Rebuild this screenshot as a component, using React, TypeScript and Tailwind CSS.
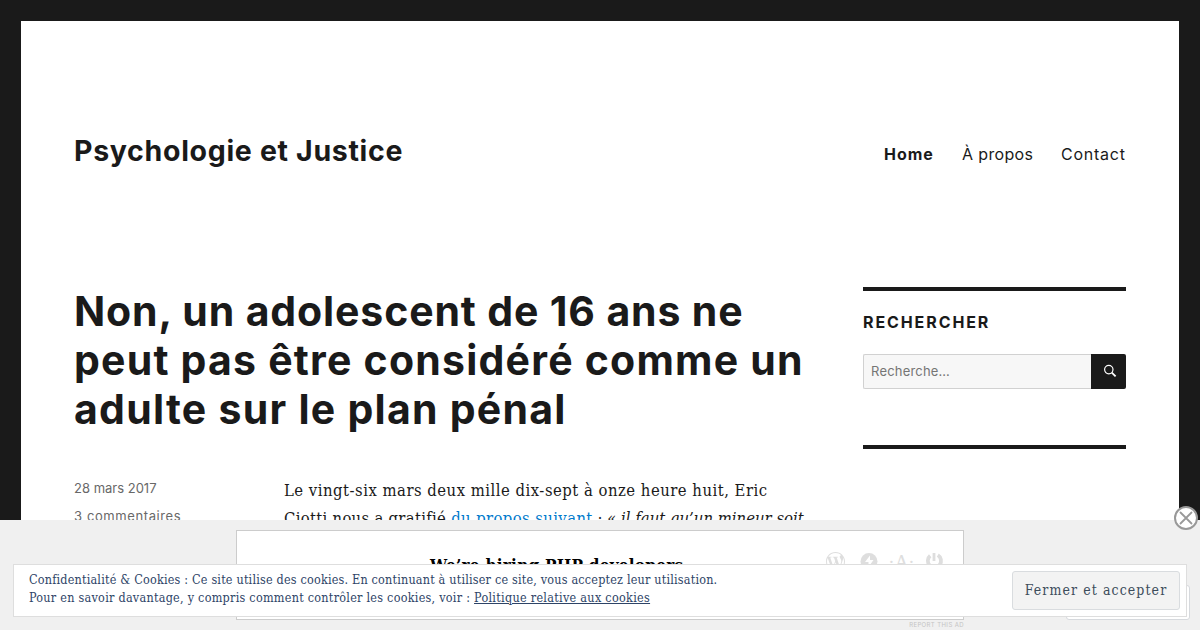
import { SiWordpress } from "react-icons/si"

const navItems = [
  { label: "Home", className: "w-[50px] font-bold tracking-[1px]" },
  { label: "À propos", className: "w-[71px] tracking-[0.35px]" },
  { label: "Contact", className: "w-16 tracking-[0.75px]" },
]

function Header() {
  return (
    <header className="flex justify-between items-center h-[260px] px-[53px]">
      <h1 className="text-[28.5px] leading-9 font-bold tracking-[0.68px] whitespace-nowrap">Psychologie et Justice</h1>
      <nav className="flex gap-7 mt-[5px] mr-px">
        {navItems.map((item) => (
          <a key={item.label} href="#" className={`text-base leading-6 whitespace-nowrap ${item.className}`}>
            {item.label}
          </a>
        ))}
      </nav>
    </header>
  )
}

function Article() {
  return (
    <article className="w-[736px]">
      <h2 className="flex flex-col text-[41px] leading-[49px] font-bold whitespace-nowrap mt-[6px]">
        <span className="tracking-[0.86px]">Non, un adolescent de 16 ans ne</span>
        <span className="tracking-[1.22px]">peut pas être considéré comme un</span>
        <span className="tracking-[1.26px]">adulte sur le plan pénal</span>
      </h2>
      <div className="flex mt-[40px]">
        <div className="flex flex-col w-[210px] text-[13px] leading-7 text-[#686868] whitespace-nowrap">
          <span className="tracking-[0px]">28 mars 2017</span>
          <span className="tracking-[0.6px]">3 commentaires</span>
        </div>
        <p className="flex flex-col mt-[3px] font-['DejaVu_Serif_Condensed','DejaVu_Serif',serif] text-[16.5px] leading-7 whitespace-nowrap">
          <span className="tracking-[0.5px]">Le vingt-six mars deux mille dix-sept à onze heure huit, Eric</span>
          <span className="tracking-[0.3px]">
            Ciotti nous a gratifié <a href="#" className="tracking-[0.4px] text-[#007acc] border-b border-[#007acc]">du propos suivant</a>
            <span className="tracking-[0.02px]"> : « <em>il faut qu’un mineur soit</em></span>
          </span>
        </p>
      </div>
    </article>
  )
}

function Sidebar() {
  return (
    <aside className="w-[263px] mt-[6px]">
      <section className="h-[158px] border-t-4 border-[#1a1a1a] pt-[21px]">
        <h3 className="text-base leading-5 font-bold tracking-[1.9px]">RECHERCHER</h3>
        <form className="flex h-[35px] mt-[22px]">
          <input
            type="search"
            placeholder="Recherche…"
            className="w-[228px] px-[7px] text-[13px] tracking-[0.2px] bg-[#f7f7f7] border border-[#d1d1d1] border-r-0 rounded-l-xs placeholder:text-[#757575] outline-none"
          />
          <button type="button" className="flex items-center justify-center w-[35px] pl-[3px] pb-px bg-[#1a1a1a] rounded-r-xs">
            <svg width="14" height="14" viewBox="0 0 14 14" fill="none" stroke="white">
              <circle cx="5.8" cy="5.6" r="4.2" strokeWidth="1.2" />
              <path d="M8.8 8.6L12.6 12.4" strokeWidth="1.8" />
            </svg>
          </button>
        </form>
      </section>
      <section className="border-t-4 border-[#1a1a1a]" />
    </aside>
  )
}

function AdIcons() {
  return (
    <div className="absolute left-[589px] top-[21px] flex gap-[14px] text-[#dedede]">
      <SiWordpress size={19} />
      <svg width="19" height="19" viewBox="0 0 19 19" fill="currentColor">
        <circle cx="10" cy="9.5" r="8.5" />
        <path d="M11 3.5L6 10h3.5v5l5-7H11z" fill="white" />
      </svg>
      <span className="flex justify-center w-[19px] h-[19px] font-['Liberation_Serif',serif] text-[19px] leading-[19px]">·A·</span>
      <svg width="19" height="19" viewBox="0 0 19 19" fill="none" stroke="currentColor">
        <path d="M5.2 3.8A6.6 6.6 0 1 0 12.8 3.2" strokeWidth="3.8" />
        <path d="M9 1v8" strokeWidth="2.8" />
      </svg>
    </div>
  )
}

function AdBar() {
  return (
    <div className="absolute inset-x-0 bottom-0 h-[110px] bg-[#f0f0f0] pt-[10px]">
      <div className="relative w-[728px] h-[90px] mx-auto bg-white border border-[#ccc]">
        <p className="absolute left-[193px] top-[22px] font-['DejaVu_Serif_Condensed','DejaVu_Serif',serif] text-[17px] leading-6 font-bold text-black whitespace-nowrap tracking-[0.24px]">
          We’re hiring PHP developers
        </p>
        <AdIcons />
      </div>
      <p className="w-[728px] mx-auto text-right text-[6px] leading-[10px] tracking-[0.4px] text-[#c4c4c4]">REPORT THIS AD</p>
      <button type="button" className="absolute right-[2px] -top-[14px]">
        <svg width="24" height="24" viewBox="0 0 24 24" fill="none" stroke="#999">
          <circle cx="12" cy="12" r="11" fill="white" strokeWidth="2" />
          <path d="M6.5 6.5l11 11M17.5 6.5l-11 11" strokeWidth="1.8" strokeLinecap="round" />
        </svg>
      </button>
      <div className="absolute right-[10px] bottom-[10px] w-[124px] h-[35px] bg-white border border-[#d6d9dd] rounded-[3px]" />
    </div>
  )
}

function CookieBanner() {
  return (
    <div className="absolute left-[13px] top-[564px] w-[1174px] h-[53px] flex justify-between bg-white border border-[#dedede] pl-[15px] pr-[6px] font-['DejaVu_Serif_Condensed','DejaVu_Serif',serif] text-[#2e4467]">
      <p className="flex flex-col pt-[6px] text-[12.5px] leading-[18px] whitespace-nowrap">
        <span className="tracking-[0.19px]">Confidentialité &amp; Cookies : Ce site utilise des cookies. En continuant à utiliser ce site, vous acceptez leur utilisation.</span>
        <span className="tracking-[0.255px]">
          Pour en savoir davantage, y compris comment contrôler les cookies, voir : <a href="#" className="underline tracking-[0.29px]">Politique relative aux cookies</a>
        </span>
      </p>
      <button type="button" className="w-[168px] h-[39px] mt-[6px] pb-[2px] bg-[#f3f3f3] border border-[#d9dcdf] rounded-[3px] text-sm tracking-[1.08px] text-[#3d4d5c] whitespace-nowrap">
        Fermer et accepter
      </button>
    </div>
  )
}

export default function App() {
  return (
    <div className="relative h-[630px] overflow-hidden bg-[#1a1a1a] px-[21px] pt-[21px] font-['Inter','Liberation_Sans',sans-serif] text-[#1a1a1a]">
      <div className="h-[700px] bg-white">
        <Header />
        <main className="flex justify-between px-[53px]">
          <Article />
          <Sidebar />
        </main>
      </div>
      <AdBar />
      <CookieBanner />
    </div>
  )
}
